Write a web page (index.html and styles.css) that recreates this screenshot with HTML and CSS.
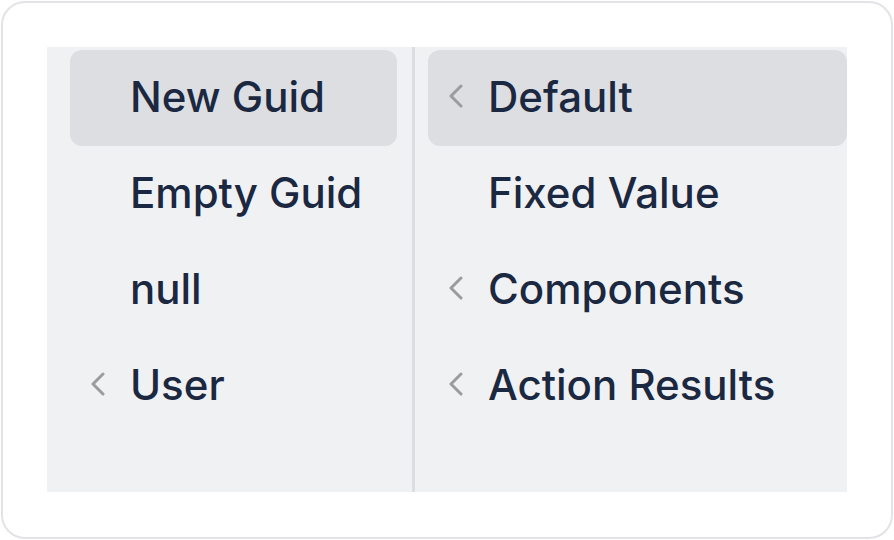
FILE: index.html
```html
<!DOCTYPE html>
<html>
<head>
<meta charset="utf-8">
<link rel="stylesheet" href="styles.css">
</head>
<body>
<div class="card">
  <div class="panel">
    <div class="col col-left">
      <div class="item active"><span class="chev"></span><span class="label">New Guid</span></div>
      <div class="item"><span class="chev"></span><span class="label">Empty Guid</span></div>
      <div class="item"><span class="chev"></span><span class="label">null</span></div>
      <div class="item"><span class="chev"><svg viewBox="0 0 16 24" width="16" height="24"><path d="M13 2 L3 12 L13 22" /></svg></span><span class="label">User</span></div>
    </div>
    <div class="divider"></div>
    <div class="col col-right">
      <div class="item active"><span class="chev"><svg viewBox="0 0 16 24" width="16" height="24"><path d="M13 2 L3 12 L13 22" /></svg></span><span class="label">Default</span></div>
      <div class="item"><span class="chev"></span><span class="label">Fixed Value</span></div>
      <div class="item"><span class="chev"><svg viewBox="0 0 16 24" width="16" height="24"><path d="M13 2 L3 12 L13 22" /></svg></span><span class="label">Components</span></div>
      <div class="item"><span class="chev"><svg viewBox="0 0 16 24" width="16" height="24"><path d="M13 2 L3 12 L13 22" /></svg></span><span class="label">Action Results</span></div>
    </div>
  </div>
</div>
</body>
</html>
```
FILE: styles.css
```css
html, body {
  margin: 0;
  padding: 0;
  background: #ffffff;
}
body {
  width: 894px;
  height: 540px;
  padding: 1px;
  box-sizing: border-box;
  font-family: Inter, "Noto Sans", sans-serif;
}
.card {
  width: 892px;
  height: 538px;
  box-sizing: border-box;
  border: 2px solid #e1e3e7;
  border-radius: 24px;
  background: #ffffff;
  padding: 44px;
}
.panel {
  width: 800px;
  height: 445px;
  background: #f0f1f3;
  display: grid;
  grid-template-columns: 365px 3px 432px;
}
.divider {
  background: #dcdde1;
}
.col {
  padding-top: 3px;
  display: flex;
  flex-direction: column;
  overflow: hidden;
}
.col-left {
  padding-left: 23px;
  padding-right: 15px;
}
.col-right {
  padding-left: 13px;
}
.item {
  height: 96px;
  flex: none;
  border-radius: 12px;
  display: flex;
  align-items: center;
  padding-left: 20px;
  padding-bottom: 3px;
  box-sizing: border-box;
  color: #1b2841;
  font-size: 42px;
  font-weight: 500;
  white-space: nowrap;
}
.item.active {
  background: #dddee2;
}
.chev {
  width: 16px;
  height: 24px;
  margin-right: 24px;
  display: flex;
  margin-top: -1px;
}
.chev svg path {
  fill: none;
  stroke: #9c9c9c;
  stroke-width: 3;
  stroke-linecap: round;
  stroke-linejoin: round;
}
```
